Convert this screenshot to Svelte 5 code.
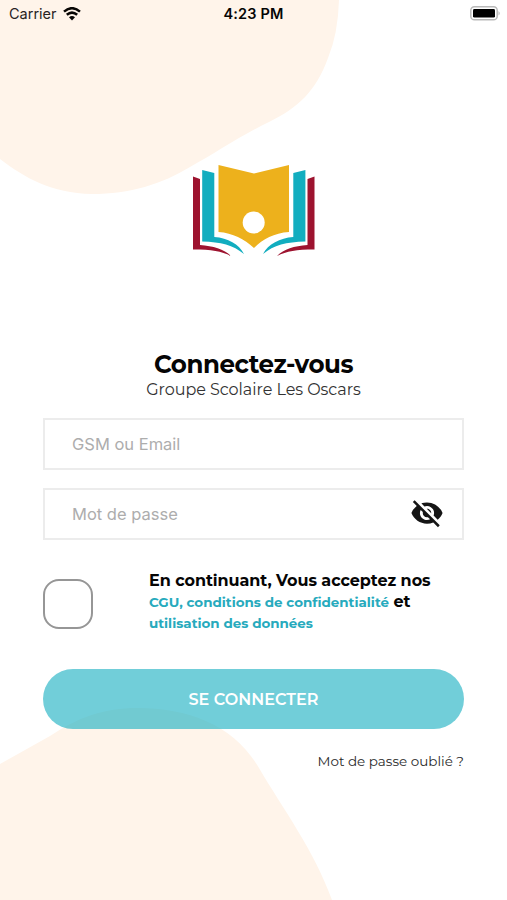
<script>
  let login = $state("");
  let password = $state("");
  let showPassword = $state(false);
  let accepted = $state(false);
</script>

<div class="screen">
  <svg class="background" viewBox="0 0 507 900" aria-hidden="true">
    <path d="M0 0H339Q338 34 328 58C316 91 298 108 269 122C238 137 216 153 190 167C162 184 130 194 92 194C51 193 25 178 0 159Z" />
    <path d="M0 764L50 736C76 719 97 710 132 708C188 707 234 725 259 768C283 809 314 850 332 900H0Z" />
  </svg>

  <header class="status">
    <div class="carrier">
      <span>Carrier</span>
      <svg width="18" height="14" viewBox="0 0 18 14">
        <path d="M1 4.6Q9-2.2 17 4.6M3.8 7.8Q9 3.4 14.2 7.8" fill="none" stroke="#080604" stroke-width="2.5" />
        <path d="M6 10.2Q9 7.8 12 10.2L9 13.4Z" fill="#080604" />
      </svg>
    </div>
    <span class="time">4:23 PM</span>
    <svg class="battery" width="31" height="15" viewBox="0 0 31 15">
      <rect x=".8" y=".8" width="26.4" height="13" rx="3.6" fill="#fff" stroke="#b9b9b9" stroke-width="1.5" />
      <rect x="3" y="3" width="22" height="8.6" rx="1.4" />
      <path d="M28.5 5Q31 7.3 28.5 9.6Z" fill="#b9b9b9" />
    </svg>
  </header>

  <main>
    <svg class="logo" width="122" height="92" viewBox="0 0 122 92" role="img" aria-label="Les Oscars">
      <path fill="#edb11c" d="M25.5 0L61 8.5L96 0V67C81 68 70 74 61 83C51 74 40 68 25.5 67Z" />
      <circle cx="60.7" cy="57.5" r="11" fill="#fff" />
      <path fill="#12adbf" d="M9.2 5L21.3 8V72C35 73 46 79 51 89C40 80 28 77 9.2 76.5Z" />
      <path fill="#12adbf" d="M112.4 5L100.3 8V72C87 73 75 79 70 89C81 80 93 77 112.4 76.5Z" />
      <path fill="#9d132f" d="M0 11.5L7 14V80C20 81 31 84 38 91C28 86 19 84.5 0 84.5Z" />
      <path fill="#9d132f" d="M121.5 11.5L114.5 14V80C101 81 91 84 84 91C94 86 103 84.5 121.5 84.5Z" />
    </svg>

    <h1>Connectez-vous</h1>
    <p class="school">Groupe Scolaire Les Oscars</p>

    <div class="field">
      <input type="text" placeholder="GSM ou Email" bind:value={login} />
    </div>
    <div class="field">
      <input
        type={showPassword ? "text" : "password"}
        placeholder="Mot de passe"
        bind:value={password}
      />
      <button class="eye" aria-label="Afficher le mot de passe" onclick={() => (showPassword = !showPassword)}>
        <svg width="34" height="34" viewBox="0 0 24 24">
          <path d="M12 7c2.76 0 5 2.24 5 5 0 .65-.13 1.26-.36 1.83l2.92 2.92c1.51-1.26 2.7-2.89 3.43-4.75-1.73-4.39-6-7.5-11-7.5-1.4 0-2.74.25-3.98.7l2.16 2.16C10.74 7.13 11.35 7 12 7zM2 4.27l2.28 2.28.46.46C3.08 8.3 1.78 10.02 1 12c1.73 4.39 6 7.5 11 7.5 1.55 0 3.03-.3 4.38-.84l.42.42L19.73 22 21 20.73 3.27 3 2 4.27zM7.53 9.8l1.55 1.55c-.05.21-.08.43-.08.65 0 1.66 1.34 3 3 3 .22 0 .44-.03.65-.08l1.55 1.55c-.67.33-1.41.53-2.2.53-2.76 0-5-2.24-5-5 0-.79.2-1.53.53-2.2zm4.31-.78l3.15 3.15.02-.16c0-1.66-1.34-3-3-3l-.17.01z" />
        </svg>
      </button>
    </div>

    <div class="terms">
      <input type="checkbox" aria-label="Accepter" bind:checked={accepted} />
      <div class="terms-text">
        <div class="intro">En continuant, Vous acceptez nos</div>
        <div><span class="link">CGU, conditions de confidentialité</span> <span>et</span></div>
        <div class="link">utilisation des données</div>
      </div>
    </div>

    <button class="submit">SE CONNECTER</button>
    <div class="forgot"><span>Mot de passe oublié ?</span></div>
  </main>
</div>

<style>
  :global(body) {
    margin: 0;
    background: #fff;
  }

  .screen {
    position: relative;
    height: 900px;
    overflow: hidden;
    font-family: Montserrat, Inter, sans-serif;
    color: #050505;
  }

  .background {
    position: absolute;
    inset: 0;
    width: 507px;
    height: 900px;
    fill: #fff4ea;
  }

  .status {
    position: relative;
    display: grid;
    grid-template-columns: 1fr auto 1fr;
    align-items: center;
    height: 27px;
    padding: 0 6px 0 9px;
    font-family: Inter, sans-serif;
    font-size: 14.5px;
  }

  .carrier {
    display: flex;
    align-items: center;
    gap: 6px;
    color: #28231f;
  }

  .time {
    margin-right: 3px;
    font-weight: 600;
    letter-spacing: 0.15px;
  }

  .battery {
    justify-self: end;
  }

  main {
    position: relative;
    display: flex;
    flex-direction: column;
    padding: 138px 43px 0;
  }

  .logo {
    align-self: center;
  }

  h1 {
    margin: 92px 0 0;
    text-align: center;
    font-size: 24.5px;
    line-height: 30px;
    font-weight: 700;
    letter-spacing: -0.45px;
  }

  .school {
    margin: 0 0 18px;
    text-align: center;
    font-size: 16px;
    line-height: 21px;
    letter-spacing: -0.05px;
    color: #333;
  }

  .field {
    display: flex;
    align-items: center;
    box-sizing: border-box;
    height: 52px;
    margin-bottom: 18px;
    padding: 0 18px 0 27px;
    border: 2px solid #ececec;
    background: #fff;
  }

  .field input {
    flex: 1;
    min-width: 0;
    padding: 0;
    border: 0;
    outline: 0;
    background: none;
    font-family: Inter, sans-serif;
    font-size: 16.5px;
  }

  .field input::placeholder {
    color: #adadad;
    opacity: 1;
  }

  button {
    padding: 0;
    border: 0;
    background: none;
    font-family: inherit;
  }

  .eye svg {
    display: block;
    margin-bottom: 2px;
    fill: #151515;
  }

  .terms {
    display: flex;
    height: 100px;
  }

  .terms input {
    appearance: none;
    box-sizing: border-box;
    flex: none;
    width: 50px;
    height: 50px;
    margin: 21px 56px 0 0;
    border: 2px solid #969696;
    border-radius: 16px;
    background: #fff;
  }

  .terms-text {
    padding-top: 12px;
    white-space: nowrap;
    font-size: 16px;
    line-height: 21px;
    font-weight: 700;
  }

  .intro {
    letter-spacing: -0.05px;
  }

  .link {
    color: #27aabd;
    font-size: 13.45px;
  }

  .submit {
    height: 60px;
    margin-top: 11px;
    border-radius: 30px;
    background: rgba(18, 173, 191, 0.6);
    color: #fff;
    font-size: 16px;
    font-weight: 600;
    letter-spacing: 0.05px;
  }

  .forgot {
    margin-top: 22px;
    text-align: right;
    font-size: 13.5px;
    line-height: 20px;
    color: #292929;
  }
</style>
